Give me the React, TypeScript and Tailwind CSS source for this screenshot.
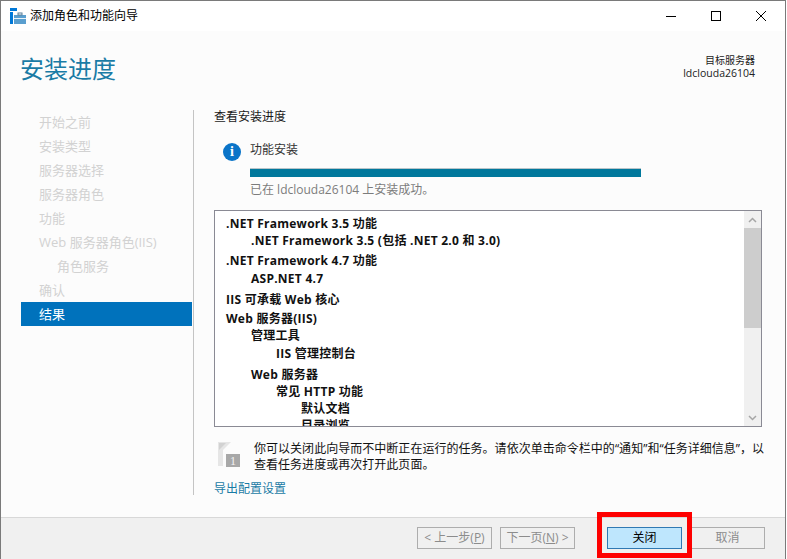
import React from 'react';

const navItems = [
  { label: '开始之前' },
  { label: '安装类型' },
  { label: '服务器选择' },
  { label: '服务器角色' },
  { label: '功能' },
  { label: 'Web 服务器角色(IIS)' },
  { label: '角色服务', sub: true },
  { label: '确认' },
  { label: '结果', active: true },
];

const rows = [
  { text: '.NET Framework 3.5 功能', cls: 'pl-[11px] mt-[4px]' },
  { text: '.NET Framework 3.5 (包括 .NET 2.0 和 3.0)', cls: 'pl-[36px]' },
  { text: '.NET Framework 4.7 功能', cls: 'pl-[11px] mt-[3px]' },
  { text: 'ASP.NET 4.7', cls: 'pl-[36px] mt-[1px]' },
  { text: 'IIS 可承载 Web 核心', cls: 'pl-[11px] mt-[4px]' },
  { text: 'Web 服务器(IIS)', cls: 'pl-[11px] mt-[2px]' },
  { text: '管理工具', cls: 'pl-[36px]' },
  { text: 'IIS 管理控制台', cls: 'pl-[61px] mt-[1px]' },
  { text: 'Web 服务器', cls: 'pl-[36px] mt-[4px]' },
  { text: '常见 HTTP 功能', cls: 'pl-[61px]' },
  { text: '默认文档', cls: 'pl-[86px]' },
  { text: '目录浏览', cls: 'pl-[86px]' },
];

const App = () => {
  return (
    <div className="w-[787px] h-[559px] relative overflow-hidden bg-white text-xs text-[#1a1a1a] font-['Open_Sans','Noto_Sans_CJK_SC',sans-serif]">
      <div className="w-[786px] h-[559px] border-l border-t border-r border-[#7a7a7a] flex flex-col bg-[#fcfcfc]">
        {/* title bar */}
        <div className="h-[30px] bg-white flex items-center shrink-0">
          <svg className="ml-[9px] w-[16px] h-[16px]" viewBox="0 0 16 16">
            <rect x="0" y="0" width="7" height="3" fill="#0078d7" />
            <rect x="0" y="4" width="3" height="12" fill="#0078d7" />
            <rect x="4" y="7" width="12" height="9" fill="#5a9fcf" />
            <rect x="4" y="10" width="12" height="1" fill="#e8f2f9" />
            <rect x="8" y="5" width="4" height="2" fill="none" stroke="#5a7f9a" strokeWidth="1" />
          </svg>
          <span className="ml-[4px] text-black">添加角色和功能向导</span>
          <div className="ml-auto flex items-center mr-[2px]">
            <div className="w-[45px] h-[30px] flex items-center justify-center">
              <div className="w-[10px] h-px bg-black" />
            </div>
            <div className="w-[45px] h-[30px] flex items-center justify-center">
              <div className="w-[10px] h-[10px] border border-black" />
            </div>
            <div className="w-[45px] h-[30px] flex items-center justify-center">
              <svg className="w-[10px] h-[10px]" viewBox="0 0 10 10">
                <path d="M0 0L10 10M10 0L0 10" stroke="#000" strokeWidth="1" fill="none" />
              </svg>
            </div>
          </div>
        </div>

        {/* header */}
        <div className="h-[78px] shrink-0 flex justify-between pl-[20px] pr-[30px]">
          <h1 className="text-[24px] leading-[32px] mt-[22px] text-[#1a7ba5] font-normal -ml-px">安装进度</h1>
          <div className="text-right text-[10px] leading-[13px] mt-[23px] text-[#222]">
            <div>目标服务器</div>
            <div className="text-[10.5px]">ldclouda26104</div>
          </div>
        </div>

        {/* body */}
        <div className="h-[408px] shrink-0 flex">
          <div className="w-[172px] ml-[20px] pr-px flex flex-col mt-[1px]">
            {navItems.map((item) => (
              <div
                key={item.label}
                className={
                  'h-[24px] flex items-center text-[13px] pt-[2px] ' +
                  (item.active ? 'bg-[#0072bc] text-white ' : 'text-[#d2d2d2] ') +
                  (item.sub ? 'pl-[36px]' : 'pl-[18px]')
                }
              >
                {item.label}
              </div>
            ))}
          </div>
          <div className="w-px h-[385px] bg-[#c4c4c4] mt-[1px]" />

          <div className="ml-[20px] w-[548px] flex flex-col">
            <div className="h-[16px] leading-[16px] text-[12px]">查看安装进度</div>
            <div className="flex mt-[18px] ml-[9px]">
              <div className="w-[18px] h-[18px] rounded-full bg-[#0a74c8] text-white flex items-center justify-center text-[14px] font-bold leading-none font-['Liberation_Serif',serif] shrink-0">
                i
              </div>
              <div className="ml-[9px] flex flex-col">
                <div className="h-[14px] leading-[14px] text-[#333]">功能安装</div>
                <div className="w-[391px] h-[9px] mt-[11px] bg-[#00789c] border-t border-[#b8c4c9]" />
                <div className="h-[16px] leading-[16px] mt-[5px] text-[#7c7c7c]">已在 ldclouda26104 上安装成功。</div>
              </div>
            </div>

            {/* feature list */}
            <div className="w-[548px] h-[217px] mt-[12px] border border-[#8a8a94] bg-white flex overflow-hidden">
              <div className="flex-1 overflow-hidden">
                {rows.map((row) => (
                  <div key={row.text} className={'h-[17px] leading-[17px] font-bold tracking-[0.25px] text-[#111] ' + row.cls}>
                    {row.text}
                  </div>
                ))}
              </div>
              <div className="w-[17px] bg-[#f0f0f0] flex flex-col items-center shrink-0">
                <div className="h-[17px] flex items-center justify-center">
                  <svg className="w-[9px] h-[6px]" viewBox="0 0 9 6">
                    <path d="M1 5L4.5 1.5L8 5" stroke="#a6a6a6" strokeWidth="1.5" fill="none" />
                  </svg>
                </div>
                <div className="w-full h-[100px] bg-[#cdcdcd]" />
                <div className="mt-auto h-[17px] flex items-center justify-center">
                  <svg className="w-[9px] h-[6px]" viewBox="0 0 9 6">
                    <path d="M1 1L4.5 4.5L8 1" stroke="#a6a6a6" strokeWidth="1.5" fill="none" />
                  </svg>
                </div>
              </div>
            </div>

            {/* note */}
            <div className="flex mt-[15px]">
              <svg className="ml-[4px] w-[22px] h-[26px] shrink-0" viewBox="0 0 22 26">
                <path d="M0 0H13L5 8V24H0Z" fill="#e6e6e6" />
                <path d="M1 1H8L1 8Z" fill="#d2d2d2" />
                <rect x="8" y="12" width="14" height="13" fill="#a8a8a8" />
                <text x="15" y="23" textAnchor="middle" fontSize="12" fontFamily="Liberation Serif, serif" fill="#f4f4f4">1</text>
              </svg>
              <div className="ml-[14px] leading-[16px] text-[#111] whitespace-nowrap mt-[-1px] tracking-[0.03px]">
                <div>你可以关闭此向导而不中断正在运行的任务。请依次单击命令栏中的“通知”和“任务详细信息”，以</div>
                <div>查看任务进度或再次打开此页面。</div>
              </div>
            </div>
            <a className="mt-[8px] leading-[16px] text-[#1a7ba5]">导出配置设置</a>
          </div>
        </div>

        {/* footer */}
        <div className="flex-1 bg-[#f0f0f0] border-t border-[#d8d8d8] flex items-start pt-[9px] text-[12px]">
          <div className="ml-[416px] w-[75px] h-[22px] border border-[#adadad] flex items-center justify-center text-[#8c8c8c]">
            &lt; 上一步(<span className="underline">P</span>)
          </div>
          <div className="ml-[8px] w-[75px] h-[22px] border border-[#adadad] flex items-center justify-center text-[#8c8c8c]">
            下一页(<span className="underline">N</span>) &gt;
          </div>
          <div className="ml-[32px] w-[75px] h-[22px] border border-[#2f79b3] bg-[#bee6fd] flex items-center justify-center text-black">
            关闭
          </div>
          <div className="ml-[8px] w-[75px] h-[22px] border border-[#adadad] flex items-center justify-center text-[#8c8c8c]">
            取消
          </div>
        </div>
      </div>

      {/* red annotation */}
      <div className="absolute left-[597px] top-[512px] w-[95px] h-[46px] border-[5px] border-[#fe0000]" />
    </div>
  );
};

export default App;
